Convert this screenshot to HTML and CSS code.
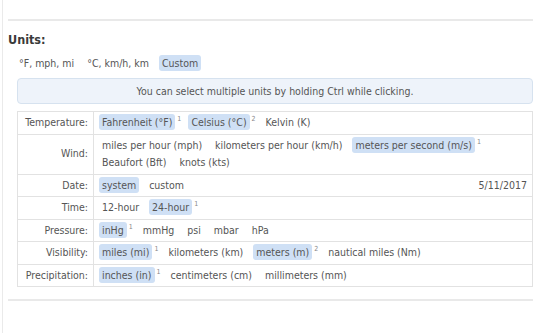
FILE: index.html
```html
<!DOCTYPE html>
<html lang="en">
<head>
  <meta charset="UTF-8">
  <meta name="viewport" content="width=device-width, initial-scale=1.0">
  <title>Units</title>
  <link rel="stylesheet" href="styles.css">
</head>
<body>
  <div class="page">
    <hr class="divider">
    <h3 class="section-title">Units:</h3>
    <div class="presets">
      <span class="opt">°F, mph, mi</span>
      <span class="opt">°C, km/h, km</span>
      <span class="opt pill">Custom</span>
    </div>
    <div class="section-body">
      <div class="info-box">You can select multiple units by holding Ctrl while clicking.</div>
      <table class="units-table">
        <tr>
          <td class="label">Temperature:</td>
          <td class="values">
            <span class="opt pill">Fahrenheit (°F)</span><sup>1</sup>
            <span class="opt pill">Celsius (°C)</span><sup>2</sup>
            <span class="opt">Kelvin (K)</span>
          </td>
        </tr>
        <tr>
          <td class="label">Wind:</td>
          <td class="values">
            <span class="opt">miles per hour (mph)</span>
            <span class="opt">kilometers per hour (km/h)</span>
            <span class="opt pill">meters per second (m/s)</span><sup>1</sup>
            <br>
            <span class="opt">Beaufort (Bft)</span>
            <span class="opt">knots (kts)</span>
          </td>
        </tr>
        <tr>
          <td class="label">Date:</td>
          <td class="values">
            <div class="split">
              <span>
                <span class="opt pill">system</span>
                <span class="opt">custom</span>
              </span>
              <span class="date-preview">5/11/2017</span>
            </div>
          </td>
        </tr>
        <tr>
          <td class="label">Time:</td>
          <td class="values">
            <span class="opt">12-hour</span>
            <span class="opt pill">24-hour</span><sup>1</sup>
          </td>
        </tr>
        <tr>
          <td class="label">Pressure:</td>
          <td class="values">
            <span class="opt pill">inHg</span><sup>1</sup>
            <span class="opt">mmHg</span>
            <span class="opt">psi</span>
            <span class="opt">mbar</span>
            <span class="opt">hPa</span>
          </td>
        </tr>
        <tr>
          <td class="label">Visibility:</td>
          <td class="values">
            <span class="opt pill">miles (mi)</span><sup>1</sup>
            <span class="opt">kilometers (km)</span>
            <span class="opt pill">meters (m)</span><sup>2</sup>
            <span class="opt">nautical miles (Nm)</span>
          </td>
        </tr>
        <tr>
          <td class="label">Precipitation:</td>
          <td class="values">
            <span class="opt pill">inches (in)</span><sup>1</sup>
            <span class="opt">centimeters (cm)</span>
            <span class="opt">millimeters (mm)</span>
          </td>
        </tr>
      </table>
    </div>
    <hr class="divider bottom">
  </div>
</body>
</html>
```

FILE: styles.css
```css
* {
  margin: 0;
  padding: 0;
  box-sizing: border-box;
}
body {
  font-family: 'DejaVu Sans Condensed', 'DejaVu Sans', Verdana, sans-serif;
  font-size: 10.5px;
  color: #555;
  background: #fff;
  overflow: hidden;
}
.page {
  margin-left: 2px;
  border-left: 1px solid #eaeaea;
  padding: 19px 0 0 5px;
  width: 540px;
  height: 333px;
}
.divider {
  border: none;
  border-top: 2px solid #e9e9e9;
  width: 530px;
}
.divider.bottom {
  margin-top: 12px;
}
.section-title {
  font-size: 12.5px;
  font-weight: bold;
  color: #3a3a3a;
  margin-top: 11px;
  line-height: 16px;
}
.presets {
  margin-top: 6px;
  padding-left: 8px;
  line-height: 18px;
}
.opt {
  padding: 2px 3px;
  margin-right: 4px;
  border-radius: 3px;
}
.pill {
  background: #cfe0f5;
}
sup {
  font-size: 7px;
  color: #888;
  vertical-align: top;
  line-height: 10px;
  margin-left: -2px;
  margin-right: 4px;
}
.section-body {
  padding-left: 9px;
  width: 525px;
}
.info-box {
  margin-top: 6px;
  height: 26px;
  line-height: 24px;
  text-align: center;
  background: #eef3fa;
  border: 1px solid #d6e2ef;
  border-radius: 4px;
}
.units-table {
  margin-top: 7px;
  width: 516px;
  border-collapse: collapse;
  border: 1px solid #e2e2e2;
}
.units-table td {
  border: 1px solid #e2e2e2;
  padding: 2px 5px;
  line-height: 17.5px;
  vertical-align: middle;
}
.units-table .label {
  width: 76px;
  text-align: right;
  white-space: nowrap;
  padding-right: 5px;
}
.units-table .values {
  padding-left: 5px;
}
.split {
  display: flex;
  justify-content: space-between;
}
```
